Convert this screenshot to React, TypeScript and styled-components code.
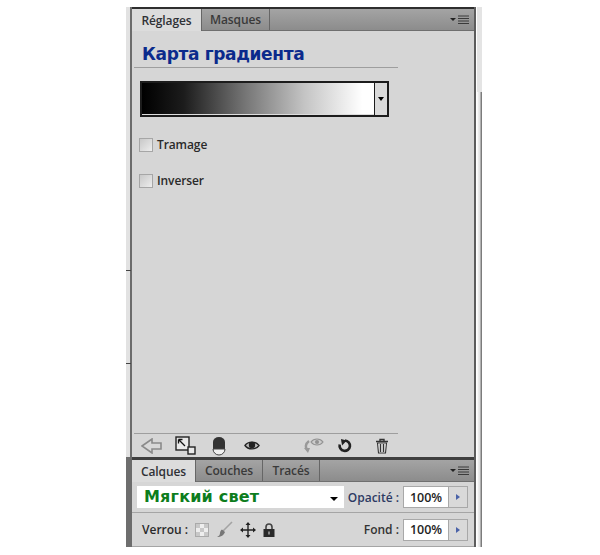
import React from "react";
import styled, { createGlobalStyle } from "styled-components";

const Global = createGlobalStyle`
  html, body { margin: 0; padding: 0; background: #fff; }
  body { width: 600px; height: 555px; overflow: hidden; font-family: "Open Sans", "Liberation Sans", sans-serif; }
`;
const Page = styled.div`
  width: 600px; height: 555px; box-sizing: border-box;
  padding: 7px 0 0 126px; display: flex; align-items: flex-start;
`;
const SideStrip = styled.div`
  position: relative; width: 4px; height: 540px; flex: none; background: #e2e2e2;
  &::after { content: ""; position: absolute; left: 0; right: 0; bottom: 0; height: 90px; background: #6e6e6e; }
`;
const Tick = styled.span<{ $y: number }>`
  position: absolute; left: 0; width: 5px; height: 1px; background: #444; top: ${p => p.$y}px;
`;
const RightStrip = styled.div`
  position: relative; width: 5px; height: 540px; flex: none; margin-left: 1px;
  background: linear-gradient(90deg, #fff 0, #e4e4e4 2px, #e4e4e4 3px, #7c7c7c 4px);
  &::before { content: ""; position: absolute; left: 0; top: 0; width: 5px; height: 85px; background: #e4e4e4; }
`;
const Panels = styled.div`
  width: 346px; height: 540px; flex: none; display: flex; flex-direction: column;
  box-sizing: border-box; border-left: 2px solid #6c6c6c; border-right: 2px solid #5c5c5c;
  background: #d6d6d6;
`;
const Upper = styled.section`
  height: 450px; flex: none; display: flex; flex-direction: column;
  border-top: 2px solid #2e2e2e;
  box-sizing: border-box;
`;
const Lower = styled.section`
  flex: 1; display: flex; flex-direction: column;
  border-top: 3px solid #3f3f3f; box-sizing: border-box;
`;
const TabBar = styled.div`
  height: 22px; flex: none; display: flex; align-items: stretch;
  background: linear-gradient(#a4a4a4, #8c8c8c); border-bottom: 1px solid #6f6f6f; box-sizing: border-box;
  position: relative;
`;
const Tab = styled.div<{ $active?: boolean; $w: number }>`
  width: ${p => p.$w}px; box-sizing: border-box; display: flex; align-items: center; justify-content: center;
  font-size: 12px; font-weight: 600; letter-spacing: -0.1px;
  color: ${p => (p.$active ? "#2f3136" : "#3a3a3a")};
  background: ${p => (p.$active ? "#dcdcdc" : "transparent")};
  border-right: 1px solid #666;
  margin-bottom: ${p => (p.$active ? "-1px" : "0")};
`;
const MenuIcon = styled.svg`
  margin-left: auto; margin-right: 4px; align-self: center; flex: none;
`;
const Body = styled.div`
  flex: 1; display: flex; flex-direction: column; padding-left: 2px;
`;
const Heading = styled.h1`
  margin: 0; padding: 10px 0 0 8px; height: 26px; box-sizing: content-box; width: 256px;
  font: bold 17px/26px "DejaVu Sans", sans-serif; color: #0b2a8c; letter-spacing: -0.35px;
`;
const Rule = styled.div`
  height: 1px; width: 264px; background: #9e9e9e; flex: none;
`;
const GradientRow = styled.div`
  margin: 13px 0 0 6px; width: 249px; height: 36px; box-sizing: border-box; display: flex;
  border: 2px solid #1c1c1c; background: #1c1c1c;
`;
const GradientBar = styled.div`
  flex: 1; background: linear-gradient(90deg, #000 0%, #1c1c1c 18%, #777 45%, #c4c4c4 70%, #fff 95%);
  border-bottom: 1px solid #ddd;
`;
const GradientArrow = styled.div`
  width: 12px; margin-left: 1px; background: #dadada; display: flex; align-items: center; justify-content: center;
  &::before { content: ""; border: 3px solid transparent; border-top: 4px solid #000; border-bottom: 0; }
`;
const Checks = styled.div`
  display: flex; flex-direction: column; gap: 21px; margin: 20px 0 0 5px;
`;
const CheckRow = styled.label`
  display: flex; align-items: center; gap: 4px; height: 15px;
  font-size: 12px; font-weight: 600; color: #2a2a2a; letter-spacing: -0.1px;
`;
const Box = styled.span`
  width: 14px; height: 14px; box-sizing: border-box; border: 1px solid #a6a6a6;
  background: linear-gradient(135deg, #c8c8c8, #ededed); flex: none;
`;
const Footer = styled.div`
  margin-top: auto; display: flex; flex-direction: column;
`;
const IconRow = styled.div`
  height: 23px; display: flex; align-items: center; padding-left: 7px; width: 264px; box-sizing: border-box;
`;
const IconSlot = styled.span<{ $w: number }>`
  width: ${p => p.$w}px; flex: none; display: flex; align-items: center;
`;
const ModeRow = styled.div`
  height: 31px; display: flex; align-items: center; padding: 0 6px 0 5px; border-bottom: 1px solid #a5a5a5; box-sizing: border-box; flex: none;
`;
const LockRow = styled.div`
  height: 34px; display: flex; align-items: center; padding: 0 6px 0 10px; border-bottom: 1px solid #a5a5a5; box-sizing: border-box; flex: none;
`;
const ModeSelect = styled.div`
  width: 207px; height: 22px; background: #fff; display: flex; align-items: center; box-sizing: border-box;
  padding: 0 6px 0 7px; font: bold 16px/22px "DejaVu Sans", sans-serif; color: #0d7d1d; letter-spacing: 0.2px;
  flex: none;
  &::after { content: ""; margin-left: auto; border: 4.5px solid transparent; border-top: 4px solid #000; border-bottom: 0; margin-top: 3px; }
`;
const FieldLabel = styled.span<{ $blue?: boolean }>`
  margin-left: auto; margin-right: 4px; font-size: 12px; font-weight: 600; color: ${p => (p.$blue ? "#2d3a63" : "#333")};
`;
const Stepper = styled.div`
  width: 65px; height: 22px; flex: none; display: flex; box-sizing: border-box; border: 1px solid #a8a8a8;
  background: #fff;
`;
const StepValue = styled.div`
  flex: 1; font-size: 12.5px; font-weight: 600; color: #1e1e1e; display: flex; align-items: center; justify-content: center;
`;
const StepButton = styled.div`
  width: 18px; background: #d9d9d9; border-left: 1px solid #a8a8a8; display: flex; align-items: center; justify-content: center;
  &::before { content: ""; border: 3px solid transparent; border-left: 4px solid #4a62a8; border-right: 0; }
`;
const LockLabel = styled.span`
  font-size: 12px; font-weight: 600; color: #2a2a2a; margin-right: 7px;
`;
const LockIcons = styled.div`
  display: flex; align-items: center; gap: 7px;
`;

const Menu = () => (
  <MenuIcon width="20" height="9" viewBox="0 0 20 9">
    <path d="M0 3h6L3 6z" fill="#222" />
    <path d="M8 1h11M8 3.5h11M8 6h11M8 8.5h11" stroke="#3a3a3a" strokeWidth="1" />
  </MenuIcon>
);

const BackIcon = () => (
  <svg width="22" height="16" viewBox="0 0 22 16">
    <path d="M1 8 11 1v4h9v6h-9v4z" fill="#d8d8d8" stroke="#8a8a8a" strokeWidth="1.6" />
  </svg>
);
const ClipIcon = () => (
  <svg width="21" height="19" viewBox="0 0 21 19">
    <rect x="1" y="1" width="13" height="13" fill="#e8e8e8" stroke="#222" strokeWidth="1.4" />
    <rect x="13" y="11" width="7" height="7" fill="#e8e8e8" stroke="#222" strokeWidth="1.4" />
    <path d="M3.5 3.5 10 10M3.5 3.5h4M3.5 3.5v4" stroke="#111" strokeWidth="1.3" fill="none" />
  </svg>
);
const MaskIcon = () => (
  <svg width="14" height="20" viewBox="0 0 14 20">
    <path d="M1 6a6 5 0 0 1 12 0v8H1z" fill="#333" />
    <path d="M1 13a6 6 0 0 0 12 0z" fill="#f0f0f0" stroke="#444" strokeWidth="1" />
  </svg>
);
const EyeIcon = () => (
  <svg width="16" height="11" viewBox="0 0 16 11">
    <path d="M1 5.5C4 1 12 1 15 5.5 12 10 4 10 1 5.5z" fill="#bbb" stroke="#222" strokeWidth="1.4" />
    <circle cx="8" cy="5" r="3.2" fill="#222" />
  </svg>
);
const PrevStateIcon = () => (
  <svg width="22" height="17" viewBox="0 0 22 17">
    <path d="M7 4C3 7 3 11 6 13" stroke="#999" strokeWidth="2.4" fill="none" />
    <path d="M2 11l6 0-2 5z" fill="#999" />
    <path d="M9 5C12 1 18 1 21 5 18 9 12 9 9 5z" fill="#ccc" stroke="#929292" strokeWidth="1.2" />
    <circle cx="15" cy="5" r="2" fill="#929292" />
  </svg>
);
const ResetIcon = () => (
  <svg width="15" height="15" viewBox="0 0 15 15">
    <path d="M8 2.5a5.2 5.2 0 1 1-5.3 4" stroke="#222" strokeWidth="2.6" fill="none" />
    <path d="M4.5 0.5v6.5L10 3z" fill="#222" transform="rotate(-10 7 4)" />
  </svg>
);
const TrashIcon = () => (
  <svg width="14" height="16" viewBox="0 0 14 16">
    <path d="M1 3.5h12M5 3V1.5h4V3" stroke="#333" strokeWidth="1.4" fill="none" />
    <path d="M2.5 5h9L10.5 15h-7z" fill="#eee" stroke="#333" strokeWidth="1.1" />
    <path d="M5.5 6v8M8.5 6v8" stroke="#333" strokeWidth="1.4" />
  </svg>
);
const CheckerIcon = () => (
  <svg width="14" height="14" viewBox="0 0 14 14">
    <rect x="0.5" y="0.5" width="13" height="13" fill="#eee" stroke="#aaa" />
    <path d="M1 1h4v4H1zM9 1h4v4H9zM5 5h4v4H5zM1 9h4v4H1zM9 9h4v4H9z" fill="#c8c8c8" />
  </svg>
);
const BrushIcon = () => (
  <svg width="17" height="17" viewBox="0 0 17 17">
    <path d="M16 1 7 10" stroke="#a3a3a3" strokeWidth="1.6" />
    <path d="M6 8.5 9 11c-1 3-4 5-8 5 2-1 3-2 3-4 0-1 1-3 2-3.5z" fill="#777" />
  </svg>
);
const MoveIcon = () => (
  <svg width="16" height="16" viewBox="0 0 16 16">
    <path d="M8 1v14M1 8h14" stroke="#222" strokeWidth="1.4" />
    <path d="M8 0l2.5 3h-5zM8 16l2.5-3h-5zM0 8l3-2.5v5zM16 8l-3-2.5v5z" fill="#222" />
  </svg>
);
const LockIcon = () => (
  <svg width="12" height="14" viewBox="0 0 12 14">
    <path d="M3 6V4a3 3 0 0 1 6 0v2" stroke="#444" strokeWidth="1.6" fill="none" />
    <rect x="0.5" y="6" width="11" height="8" fill="#2a2a2a" />
    <rect x="5" y="8.5" width="2" height="3" fill="#888" />
  </svg>
);

export default function App() {
  return (
    <Page>
      <Global />
      <SideStrip>
        <Tick $y={263} />
        <Tick $y={356} />
      </SideStrip>
      <Panels>
        <Upper>
          <TabBar>
            <Tab $active $w={70}>Réglages</Tab>
            <Tab $w={68}>Masques</Tab>
            <Menu />
          </TabBar>
          <Body>
            <Heading>Карта градиента</Heading>
            <Rule />
            <GradientRow>
              <GradientBar />
              <GradientArrow />
            </GradientRow>
            <Checks>
              <CheckRow><Box />Tramage</CheckRow>
              <CheckRow><Box />Inverser</CheckRow>
            </Checks>
            <Footer>
              <Rule />
              <IconRow>
                <IconSlot $w={34}><BackIcon /></IconSlot>
                <IconSlot $w={37}><ClipIcon /></IconSlot>
                <IconSlot $w={32}><MaskIcon /></IconSlot>
                <IconSlot $w={58}><EyeIcon /></IconSlot>
                <IconSlot $w={35}><PrevStateIcon /></IconSlot>
                <IconSlot $w={38}><ResetIcon /></IconSlot>
                <IconSlot $w={16}><TrashIcon /></IconSlot>
              </IconRow>
            </Footer>
          </Body>
        </Upper>
        <Lower>
          <TabBar>
            <Tab $active $w={64}>Calques</Tab>
            <Tab $w={67}>Couches</Tab>
            <Tab $w={57}>Tracés</Tab>
            <Menu />
          </TabBar>
          <ModeRow>
            <ModeSelect>Мягкий свет</ModeSelect>
            <FieldLabel $blue>Opacité :</FieldLabel>
            <Stepper><StepValue>100%</StepValue><StepButton /></Stepper>
          </ModeRow>
          <LockRow>
            <LockLabel>Verrou :</LockLabel>
            <LockIcons>
              <CheckerIcon />
              <BrushIcon />
              <MoveIcon />
              <LockIcon />
            </LockIcons>
            <FieldLabel>Fond :</FieldLabel>
            <Stepper><StepValue>100%</StepValue><StepButton /></Stepper>
          </LockRow>
        </Lower>
      </Panels>
      <RightStrip />
    </Page>
  );
}
